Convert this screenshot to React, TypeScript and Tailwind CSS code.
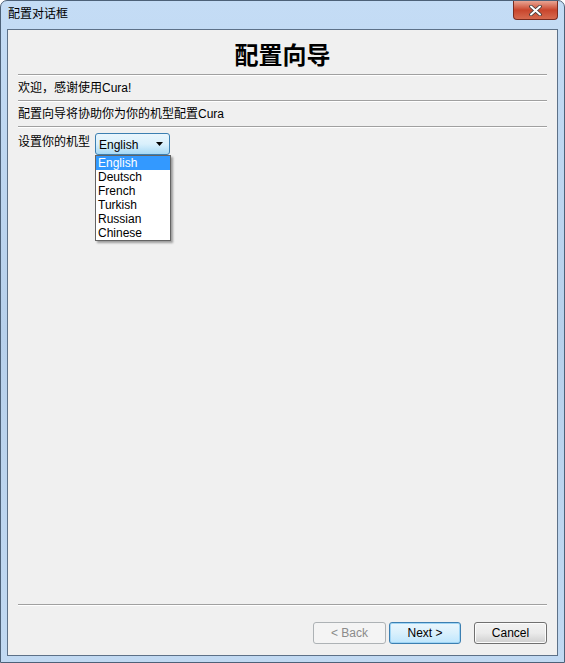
import React from 'react';

const uiFont = { fontFamily: '"Liberation Sans", "Noto Sans CJK SC", sans-serif' };

const Separator = () => <div className="h-px bg-[#a0a0a0] border-b border-white box-content" />;

export default function App() {
    const languages = ['English', 'Deutsch', 'French', 'Turkish', 'Russian', 'Chinese'];

    return (
        <div
            className="w-[565px] h-[663px] flex flex-col rounded-t-[7px] border border-[#4d6178] bg-gradient-to-b from-[#c4dcf5] via-[#b7d0eb] to-[#c1d9f2] text-[12px] text-black overflow-hidden"
            style={uiFont}
        >
            {/* title bar */}
            <div className="h-[28px] flex items-start justify-between shrink-0">
                <div className="pl-[7px] pt-[6px] leading-[14px] text-[12px]">配置对话框</div>
                <div className="mr-[6px] w-[45px] h-[19px] rounded-b-[4px] border border-t-0 border-[#7a2c20] bg-gradient-to-b from-[#e8a493] via-[#c9452c] to-[#d66a4f] flex items-center justify-center">
                    <svg width="13" height="11" viewBox="0 0 13 11">
                        <path d="M2 1.5 L11 9.5 M11 1.5 L2 9.5" stroke="#3a3a3a" strokeWidth="3.6" strokeLinecap="round" />
                        <path d="M2 1.5 L11 9.5 M11 1.5 L2 9.5" stroke="#ffffff" strokeWidth="2" strokeLinecap="round" />
                    </svg>
                </div>
            </div>

            {/* client area */}
            <div className="flex-1 mx-[6px] mb-[6px] border border-[#5d7188] bg-[#f0f0f0] flex flex-col">
                <div className="flex-1 flex flex-col pl-[10px] pr-[10px]">
                    <div
                        className="pt-[9px] h-[44px] text-center text-[24px] font-semibold leading-[30px]"
                        style={{ fontFamily: '"Noto Sans CJK SC", sans-serif' }}
                    >
                        配置向导
                    </div>
                    <Separator />
                    <div className="h-[24px] flex items-center">欢迎，感谢使用Cura!</div>
                    <Separator />
                    <div className="h-[24px] flex items-center">配置向导将协助你为你的机型配置Cura</div>
                    <Separator />
                    <div className="flex items-start pt-[5px] gap-[5px]">
                        <span className="leading-[15px] pt-[2px]">设置你的机型</span>
                        <div className="relative">
                            <div className="w-[75px] h-[22px] rounded-[3px] border border-[#3c7fb1] bg-gradient-to-b from-[#eaf6fd] via-[#d9f0fc] to-[#a7d9f5] flex items-center justify-between pl-[3px] pr-[6px]">
                                <span className="leading-[14px] pt-[2px]">English</span>
                                <svg width="7" height="4" viewBox="0 0 7 4">
                                    <path d="M0 0 H7 L3.5 4 Z" fill="#000" />
                                </svg>
                            </div>
                            <div className="absolute left-0 top-[22px] w-[76px] bg-white border border-[#646464] shadow-[2px_2px_2px_rgba(0,0,0,0.35)] z-10">
                                {languages.map((lang, i) => (
                                    <div
                                        key={lang}
                                        className={`h-[14px] leading-[14px] pl-[2px] ${i === 0 ? 'bg-[#3399ff] text-white' : 'text-black'}`}
                                    >
                                        {lang}
                                    </div>
                                ))}
                            </div>
                        </div>
                    </div>
                    <div className="flex-1" />
                    <div className="h-px" />
                    <Separator />
                    <div className="h-[49px] flex items-start justify-end pt-[16px]">
                        <button className="w-[73px] h-[22px] rounded-[3px] border border-[#adb2b5] bg-[#f4f4f4] text-[#8b8b8b] leading-[14px]">
                            &lt; Back
                        </button>
                        <button className="ml-[3px] w-[72px] h-[22px] rounded-[3px] border border-[#3c7fb1] bg-gradient-to-b from-[#eaf6fd] via-[#d9f0fc] to-[#bee6fd] leading-[14px] shadow-[inset_0_0_0_1px_#9fd5f5]">
                            Next &gt;
                        </button>
                        <button className="ml-[13px] w-[73px] h-[22px] rounded-[3px] border border-[#707070] bg-gradient-to-b from-[#f2f2f2] via-[#ebebeb] to-[#cfcfcf] leading-[14px] shadow-[inset_0_0_0_1px_#fcfcfc]">
                            Cancel
                        </button>
                    </div>
                </div>
            </div>
        </div>
    );
}
